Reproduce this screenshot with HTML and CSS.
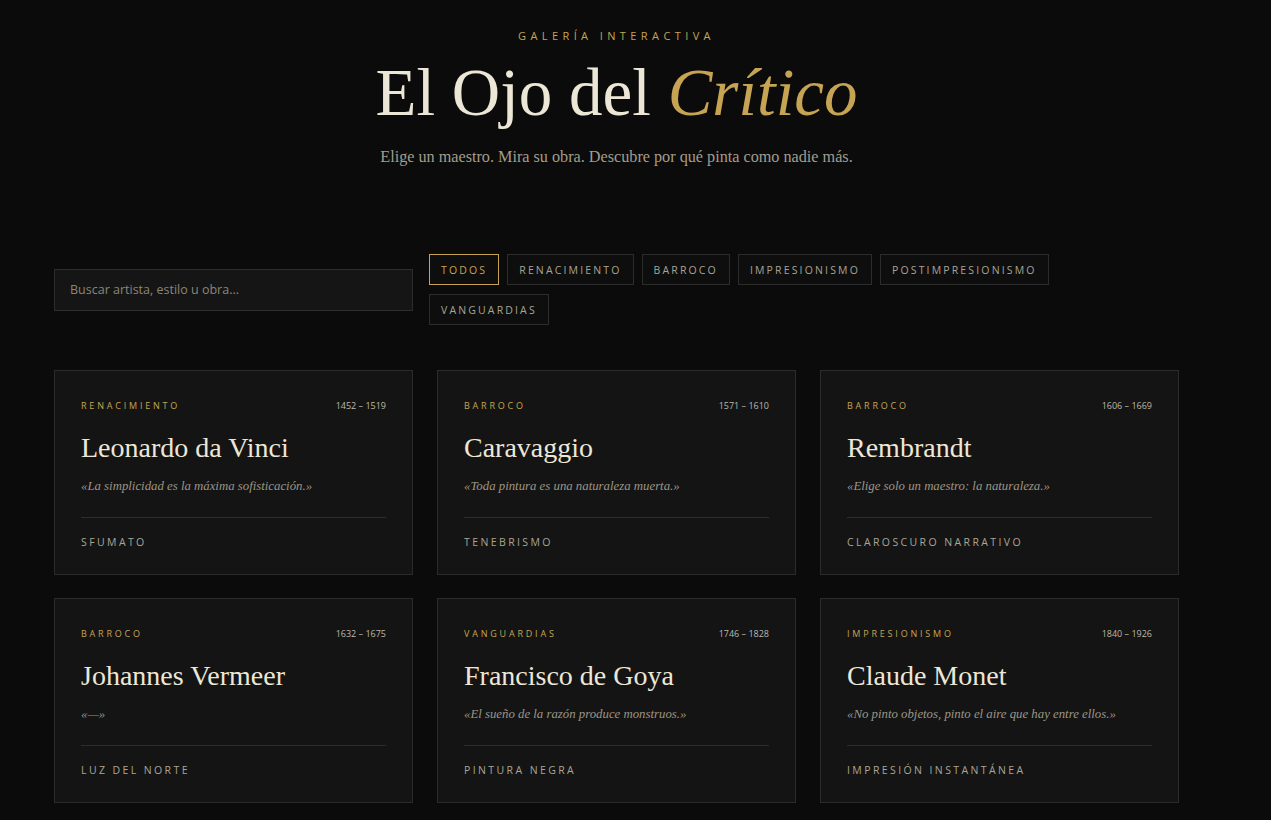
FILE: index.html
```html
<!DOCTYPE html>
<html lang="es">
<head>
<meta charset="utf-8">
<title>El Ojo del Crítico</title>
<link rel="stylesheet" href="styles.css">
</head>
<body>
<div class="page">
  <header class="hero">
    <p class="eyebrow">Galería interactiva</p>
    <h1 class="title">El Ojo del <em>Crítico</em></h1>
    <p class="subtitle">Elige un maestro. Mira su obra. Descubre por qué pinta como nadie más.</p>
  </header>

  <section class="controls">
    <input class="search" type="text" placeholder="Buscar artista, estilo u obra...">
    <div class="filters">
      <button class="chip active">Todos</button>
      <button class="chip">Renacimiento</button>
      <button class="chip">Barroco</button>
      <button class="chip">Impresionismo</button>
      <button class="chip">Postimpresionismo</button>
      <button class="chip">Vanguardias</button>
    </div>
  </section>

  <section class="grid">
    <article class="card">
      <div class="meta"><span class="period">Renacimiento</span><span class="years">1452 – 1519</span></div>
      <h2 class="name">Leonardo da Vinci</h2>
      <p class="quote">«La simplicidad es la máxima sofisticación.»</p>
      <p class="technique">Sfumato</p>
    </article>
    <article class="card">
      <div class="meta"><span class="period">Barroco</span><span class="years">1571 – 1610</span></div>
      <h2 class="name">Caravaggio</h2>
      <p class="quote">«Toda pintura es una naturaleza muerta.»</p>
      <p class="technique">Tenebrismo</p>
    </article>
    <article class="card">
      <div class="meta"><span class="period">Barroco</span><span class="years">1606 – 1669</span></div>
      <h2 class="name">Rembrandt</h2>
      <p class="quote">«Elige solo un maestro: la naturaleza.»</p>
      <p class="technique">Claroscuro narrativo</p>
    </article>
    <article class="card">
      <div class="meta"><span class="period">Barroco</span><span class="years">1632 – 1675</span></div>
      <h2 class="name">Johannes Vermeer</h2>
      <p class="quote">«—»</p>
      <p class="technique">Luz del norte</p>
    </article>
    <article class="card">
      <div class="meta"><span class="period">Vanguardias</span><span class="years">1746 – 1828</span></div>
      <h2 class="name">Francisco de Goya</h2>
      <p class="quote">«El sueño de la razón produce monstruos.»</p>
      <p class="technique">Pintura negra</p>
    </article>
    <article class="card">
      <div class="meta"><span class="period">Impresionismo</span><span class="years">1840 – 1926</span></div>
      <h2 class="name">Claude Monet</h2>
      <p class="quote">«No pinto objetos, pinto el aire que hay entre ellos.»</p>
      <p class="technique">Impresión instantánea</p>
    </article>
  </section>
</div>
</body>
</html>
```

FILE: styles.css
```css
* { box-sizing: border-box; }

html, body {
  margin: 0;
  padding: 0;
  background: #0b0b0b;
}

body {
  font-family: "Open Sans", "Liberation Sans", sans-serif;
  color: #e9e3d3;
}

.page {
  width: 1125px;
  margin-left: 54px;
  padding-bottom: 40px;
}

.hero {
  text-align: center;
  padding-top: 29px;
}

.eyebrow {
  margin: 0;
  font-size: 11px;
  line-height: 14px;
  letter-spacing: 4.4px;
  text-transform: uppercase;
  color: #c6a453;
}

.title {
  margin: 14px 0 0;
  font-family: "Liberation Serif", "DejaVu Serif", serif;
  font-weight: 400;
  font-size: 67px;
  line-height: 70px;
  color: #ece6d6;
}

.title em {
  font-style: italic;
  color: #c6a453;
}

.subtitle {
  margin: 20px 0 0;
  font-family: "Liberation Serif", serif;
  font-size: 16.2px;
  line-height: 20px;
  color: #a39d8c;
}

.controls {
  display: flex;
  align-items: center;
  gap: 16px;
  margin-top: 87px;
}

.search {
  flex: 0 0 359px;
  height: 42px;
  background: #151515;
  border: 1px solid #2d2d2d;
  padding: 0 15px;
  font-family: "Open Sans", sans-serif;
  font-size: 12.5px;
  color: #d0c9b8;
  outline: none;
}

.search::placeholder {
  color: #8b8677;
}

.filters {
  flex: 0 1 740px;
  display: flex;
  flex-wrap: wrap;
  gap: 9px 8px;
}

.chip {
  height: 31px;
  padding: 0 11px;
  background: #0e0e0e;
  border: 1px solid #2c2c2c;
  font-family: "Open Sans", sans-serif;
  font-size: 10.5px;
  letter-spacing: 2.15px;
  text-transform: uppercase;
  color: #a8a494;
  cursor: pointer;
}

.chip.active {
  border-color: #c6a453;
  color: #c6a453;
}

.grid {
  display: grid;
  grid-template-columns: repeat(3, 1fr);
  gap: 23px 24px;
  margin-top: 45px;
}

.card {
  height: 205px;
  background: #141414;
  border: 1px solid #2b2b2b;
  padding: 28px 26px 0;
}

.meta {
  display: flex;
  justify-content: space-between;
  align-items: baseline;
  line-height: 14px;
}

.period {
  font-size: 9px;
  letter-spacing: 2.8px;
  text-transform: uppercase;
  color: #c6a453;
}

.years {
  font-size: 9px;
  color: #bdb8aa;
}

.name {
  margin: 18px 0 0;
  font-family: "Liberation Serif", serif;
  font-weight: 400;
  font-size: 28px;
  line-height: 34px;
  color: #ede7d7;
}

.quote {
  margin: 12px 0 0;
  font-family: "Liberation Serif", serif;
  font-style: italic;
  font-size: 12.8px;
  line-height: 18px;
  color: #9c9686;
  padding-bottom: 22px;
  border-bottom: 1px solid #2d2d2d;
}

.technique {
  margin: 17px 0 0;
  font-size: 10.5px;
  line-height: 14px;
  letter-spacing: 2.4px;
  text-transform: uppercase;
  color: #aaa594;
}
```
